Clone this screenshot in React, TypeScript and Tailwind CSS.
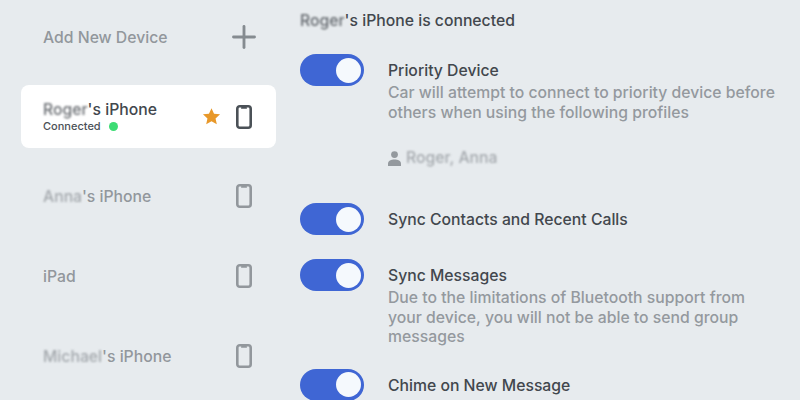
import type { ReactNode } from "react"
import { Plus } from "lucide-react"

function PhoneIcon({ active }: { active?: boolean }) {
  return (
    <svg width="16" height="24" viewBox="0 0 16 24" fill="none" className={active ? "text-[#4b5157]" : "text-[#92979c]"}>
      <rect x="1.300" y="1.300" width="13.400" height="21.400" rx="2.500" stroke="currentColor" strokeWidth="2.600" />
      <rect x="5" y="2" width="6" height="1.800" rx="0.900" fill="currentColor" />
    </svg>
  )
}

function Star() {
  return (
    <svg width="19" height="19" viewBox="0 0 24 24" fill="#e8982a">
      <path d="M12 1.500l3.200 7 7.600.8-5.700 5.100 1.600 7.500L12 18.100l-6.700 3.800 1.600-7.500L1.200 9.300l7.600-.8z" />
    </svg>
  )
}

function PersonIcon() {
  return (
    <svg width="13" height="15" viewBox="0 0 13 15" fill="#94999e">
      <circle cx="6.500" cy="3.600" r="3.400" />
      <path d="M0 15v-2.500C0 9.800 3.200 8.400 6.500 8.400s6.500 1.400 6.500 4.100V15z" />
    </svg>
  )
}

function Blurred({ children }: { children: string }) {
  return <span className="blur-[1.2px] opacity-80">{children}</span>
}

function Toggle() {
  return (
    <div className="w-16 h-8 shrink-0 rounded-full bg-[#3f66d4] flex items-center justify-end pr-[3px]">
      <div className="w-[25px] h-[25px] rounded-full bg-[#f5f9fd]" />
    </div>
  )
}

function DeviceRow({ name, suffix }: { name?: string; suffix: string }) {
  return (
    <div className="h-[80px] flex items-center justify-between pl-[22px] pr-[24px]">
      <span className="pt-[2px] text-[15.750px] font-medium text-[#92979c]">
        {name && <Blurred>{name}</Blurred>}
        {suffix}
      </span>
      <PhoneIcon />
    </div>
  )
}

function Setting({ title, desc, children }: { title: string; desc?: string; children?: ReactNode }) {
  return (
    <div className="flex gap-6">
      <Toggle />
      <div className="flex-1 min-w-0 pt-[7px]">
        <div className="text-[15.750px] leading-[20px] font-medium text-[#42474d]">{title}</div>
        {desc && <p className="mt-[2px] w-[392px] text-[15.750px] leading-[19.500px] font-medium text-[#94999e]">{desc}</p>}
        {children}
      </div>
    </div>
  )
}

export default function App() {
  return (
    <div className="w-[800px] h-[400px] overflow-hidden bg-[#e7ebee] flex font-['Inter',sans-serif]">
      <div className="w-[276px] shrink-0 pl-[21px] flex flex-col">
        <div className="h-[74px] shrink-0 flex items-center justify-between pl-[22px] pr-[14px]">
          <span className="pt-[2px] text-[15.750px] font-medium text-[#92979c]">Add New Device</span>
          <Plus size={36} strokeWidth={1.900} className="text-[#858b90]" />
        </div>
        <div className="mt-[11px] h-[63px] shrink-0 rounded-[8px] bg-white flex items-center pl-[22px] pr-[24px]">
          <div className="flex-1">
            <div className="pt-[2px] text-[15.750px] leading-[17px] font-medium text-[#42474d]">
              <Blurred>Roger</Blurred>'s iPhone
            </div>
            <div className="flex items-center gap-[8px] text-[11px] leading-[16px] font-medium text-[#4b5157]">
              Connected
              <span className="w-[9px] h-[9px] rounded-full bg-[#3ddc74]" />
            </div>
          </div>
          <div className="mr-[15px]">
            <Star />
          </div>
          <PhoneIcon active />
        </div>
        <div className="mt-[8px] flex flex-col">
          <DeviceRow name="Anna" suffix="'s iPhone" />
          <DeviceRow suffix="iPad" />
          <DeviceRow name="Michael" suffix="'s iPhone" />
        </div>
      </div>
      <div className="flex-1 pl-[24px] pt-[11px]">
        <h1 className="text-[15.750px] leading-[20px] font-medium text-[#42474d]">
          <Blurred>Roger</Blurred>'s iPhone is connected
        </h1>
        <div className="mt-[23px] flex flex-col">
          <Setting title="Priority Device" desc="Car will attempt to connect to priority device before others when using the following profiles">
            <div className="mt-[26px] flex items-center gap-[5px] text-[15.750px] leading-[20px] font-medium text-[#94999e]">
              <PersonIcon />
              <Blurred>Roger, Anna</Blurred>
            </div>
          </Setting>
          <div className="mt-[35px]">
            <Setting title="Sync Contacts and Recent Calls" />
          </div>
          <div className="mt-[24px]">
            <Setting title="Sync Messages" desc="Due to the limitations of Bluetooth support from your device, you will not be able to send group messages" />
          </div>
          <div className="mt-[22px]">
            <Setting title="Chime on New Message" />
          </div>
        </div>
      </div>
    </div>
  )
}
